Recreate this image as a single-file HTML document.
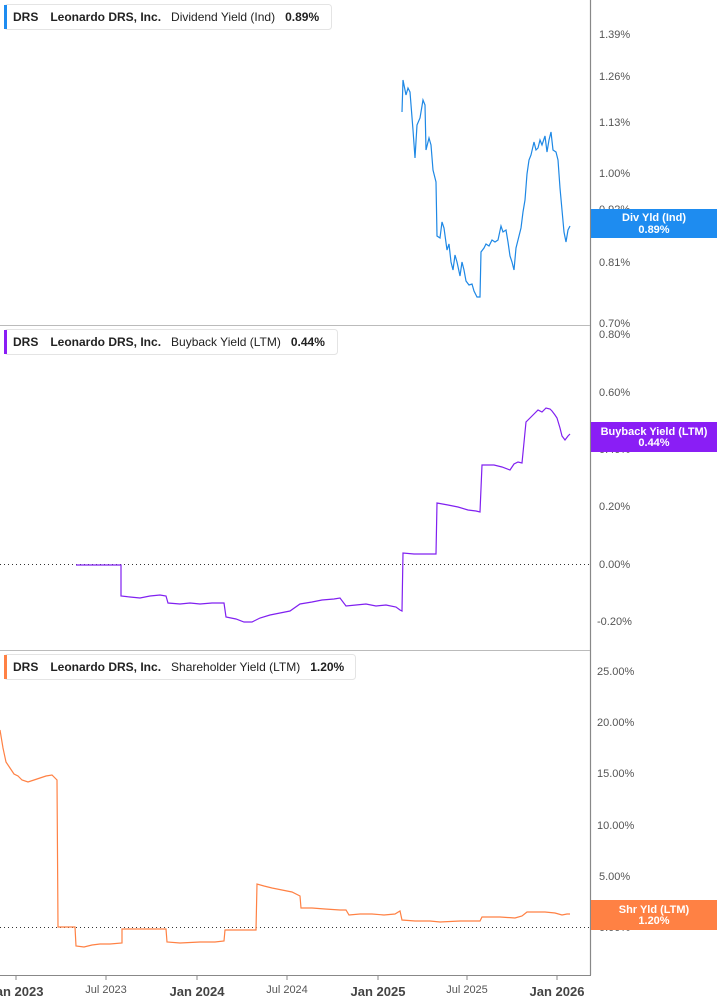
<!DOCTYPE html>
<html><head><meta charset="utf-8"><style>
html,body{margin:0;padding:0;background:#fff;width:717px;height:1005px;overflow:hidden}
svg text{font-family:"Liberation Sans",sans-serif}
.ax{font-size:11px;fill:#555}
.lg{font-size:12px;font-weight:bold;fill:#222}
</style></head><body>
<svg width="717" height="1005" viewBox="0 0 717 1005" xmlns="http://www.w3.org/2000/svg">
<!-- axis -->
<line x1="590.5" y1="0" x2="590.5" y2="975" stroke="#888" stroke-width="1.2"/>
<line x1="0" y1="325.5" x2="590" y2="325.5" stroke="#bbb"/>
<line x1="0" y1="650.5" x2="590" y2="650.5" stroke="#bbb"/>
<line x1="0" y1="975.5" x2="591" y2="975.5" stroke="#888"/>
<g stroke="#888">
<line x1="16" y1="975" x2="16" y2="980"/><line x1="106" y1="975" x2="106" y2="980"/><line x1="197" y1="975" x2="197" y2="980"/><line x1="287" y1="975" x2="287" y2="980"/><line x1="378" y1="975" x2="378" y2="980"/><line x1="467" y1="975" x2="467" y2="980"/><line x1="557" y1="975" x2="557" y2="980"/>
</g>
<g class="ax" text-anchor="middle">
<text x="16" y="996" style="font-size:13px;font-weight:bold;fill:#444">Jan 2023</text>
<text x="106" y="993">Jul 2023</text>
<text x="197" y="996" style="font-size:13px;font-weight:bold;fill:#444">Jan 2024</text>
<text x="287" y="993">Jul 2024</text>
<text x="378" y="996" style="font-size:13px;font-weight:bold;fill:#444">Jan 2025</text>
<text x="467" y="993">Jul 2025</text>
<text x="557" y="996" style="font-size:13px;font-weight:bold;fill:#444">Jan 2026</text>
</g>
<g class="ax">
<text x="599" y="38">1.39%</text><text x="599" y="80">1.26%</text><text x="599" y="126">1.13%</text><text x="599" y="177">1.00%</text><text x="599" y="213">0.92%</text><text x="599" y="266">0.81%</text><text x="599" y="327">0.70%</text>
<text x="599" y="338">0.80%</text><text x="599" y="396">0.60%</text><text x="599" y="453">0.40%</text><text x="599" y="510">0.20%</text><text x="599" y="568">0.00%</text><text x="597" y="625">-0.20%</text>
<text x="597" y="675">25.00%</text><text x="597" y="726">20.00%</text><text x="597" y="777">15.00%</text><text x="597" y="829">10.00%</text><text x="599" y="880">5.00%</text><text x="599" y="931">0.00%</text>
</g>
<line x1="0" y1="564.5" x2="590" y2="564.5" stroke="#333" stroke-dasharray="1,3"/>
<line x1="0" y1="927.5" x2="590" y2="927.5" stroke="#333" stroke-dasharray="1,3"/>
<!-- lines -->
<polyline fill="none" stroke="#1e88e5" stroke-width="1.2" points="402,112 403,80 406,95 408,88 410,92 413,130 415,158 417,125 420,118 423,100 425,105 426,150 429,138 431,145 433,170 436,182 437,236 440,238 442,222 444,228 447,250 449,244 451,262 453,270 455,255 457,262 460,276 462,262 464,270 466,281 469,285 472,284 474,291 477,297 480,297 481,252 484,248 486,244 489,246 492,240 495,242 498,240 501,226 503,232 506,230 508,242 510,256 512,262 514,270 516,248 519,236 521,228 523,212 525,200 527,174 529,160 531,155 534,142 536,150 538,148 540,140 542,145 545,136 547,152 549,140 551,132 553,150 556,152 558,160 560,188 562,210 564,232 566,242 568,230 570,226"/>
<polyline fill="none" stroke="#8020f0" stroke-width="1.2" points="76,565 121,565 121,596 130,597 140,598 150,596 160,595 166,596 168,603 180,604 190,603 200,604 212,603 224,603 226,617 236,619 244,622 252,622 260,618 270,615 280,613 290,611 300,604 312,602 322,600 334,599 340,598 346,606 356,605 366,604 376,606 386,605 396,607 400,610 402,611 403,553 414,554 424,554 436,554 437,503 448,505 458,507 468,510 476,511 480,512 482,465 494,465 502,467 510,470 514,464 518,462 522,463 526,422 530,418 534,414 538,410 542,412 546,408 550,409 552,411 555,415 557,418 560,428 562,436 565,440 568,436 570,434"/>
<polyline fill="none" stroke="#ff8144" stroke-width="1.2" points="0,730 3,748 6,762 10,768 14,774 18,776 22,780 28,782 34,780 40,778 46,776 52,775 57,780 58,927 75,927 76,946 84,947 92,945 100,944 110,944 122,943 122,929 166,929 167,942 180,943 200,942 215,942 224,941 225,930 256,930 257,884 264,886 272,888 282,890 292,892 300,896 301,908 312,908 325,909 340,910 346,910 349,915 360,914 372,914 384,915 395,914 400,911 402,920 415,921 430,921 440,922 460,921 480,921 482,917 500,917 515,918 522,916 527,912 536,912 545,912 555,913 562,915 567,914 570,914"/>
<!-- badges -->
<rect x="591" y="209" width="126" height="29" fill="#1e8cf0"/>
<text x="654" y="221" text-anchor="middle" style="font-size:11px;font-weight:bold;fill:#fff">Div Yld (Ind)</text>
<text x="654" y="233" text-anchor="middle" style="font-size:11px;font-weight:bold;fill:#fff">0.89%</text>
<rect x="591" y="422" width="126" height="30" fill="#8a1ef5"/>
<text x="654" y="435" text-anchor="middle" style="font-size:11px;font-weight:bold;fill:#fff">Buyback Yield (LTM)</text>
<text x="654" y="446" text-anchor="middle" style="font-size:11px;font-weight:bold;fill:#fff">0.44%</text>
<rect x="591" y="900" width="126" height="30" fill="#ff8144"/>
<text x="654" y="913" text-anchor="middle" style="font-size:11px;font-weight:bold;fill:#fff">Shr Yld (LTM)</text>
<text x="654" y="924" text-anchor="middle" style="font-size:11px;font-weight:bold;fill:#fff">1.20%</text>
<!-- legends -->
<rect x="4.5" y="4.5" width="327" height="25" rx="3" fill="#fff" stroke="#e4e4e4"/>
<rect x="4" y="5" width="3" height="24" fill="#1e8cf0"/>
<text class="lg" x="13" y="21">DRS<tspan dx="12">Leonardo DRS, Inc.</tspan><tspan dx="10" font-weight="normal">Dividend Yield (Ind)</tspan><tspan dx="10">0.89%</tspan></text>
<rect x="4.5" y="329.5" width="333" height="25" rx="3" fill="#fff" stroke="#e4e4e4"/>
<rect x="4" y="330" width="3" height="24" fill="#8a1ef5"/>
<text class="lg" x="13" y="346">DRS<tspan dx="12">Leonardo DRS, Inc.</tspan><tspan dx="10" font-weight="normal">Buyback Yield (LTM)</tspan><tspan dx="10">0.44%</tspan></text>
<rect x="4.5" y="654.5" width="351" height="25" rx="3" fill="#fff" stroke="#e4e4e4"/>
<rect x="4" y="655" width="3" height="24" fill="#ff8144"/>
<text class="lg" x="13" y="671">DRS<tspan dx="12">Leonardo DRS, Inc.</tspan><tspan dx="10" font-weight="normal">Shareholder Yield (LTM)</tspan><tspan dx="10">1.20%</tspan></text>
</svg>
</body></html>
